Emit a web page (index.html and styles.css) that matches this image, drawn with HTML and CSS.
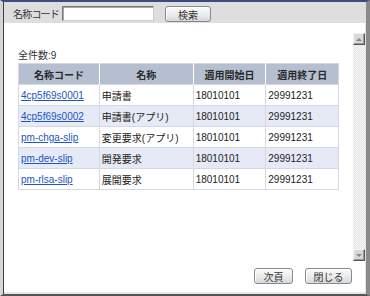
FILE: index.html
```html
<!DOCTYPE html>
<html lang="ja">
<head>
  <meta charset="UTF-8" />
  <title>名称コード検索</title>
  <link rel="stylesheet" href="styles.css">
</head>
<body>
  <div class="window">
    <!-- 検索バー -->
    <div class="toolbar">
      <label class="search-label" for="code">名称コード</label>
      <input class="search-input" id="code" type="text" />
      <button class="btn search-btn">検索</button>
    </div>

    <div class="main">
      <div class="content">
        <div class="count">全件数:9</div>
        <table class="list">
          <thead>
            <tr>
              <th class="col-code">名称コード</th>
              <th class="col-name">名称</th>
              <th class="col-date">適用開始日</th>
              <th class="col-date">適用終了日</th>
            </tr>
          </thead>
          <tbody>
            <tr>
              <td><a href="#">4cp5f69s0001</a></td>
              <td>申請書</td>
              <td>18010101</td>
              <td>29991231</td>
            </tr>
            <tr class="alt">
              <td><a href="#">4cp5f69s0002</a></td>
              <td>申請書(アプリ)</td>
              <td>18010101</td>
              <td>29991231</td>
            </tr>
            <tr>
              <td><a href="#">pm-chga-slip</a></td>
              <td>変更要求(アプリ)</td>
              <td>18010101</td>
              <td>29991231</td>
            </tr>
            <tr class="alt">
              <td><a href="#">pm-dev-slip</a></td>
              <td>開発要求</td>
              <td>18010101</td>
              <td>29991231</td>
            </tr>
            <tr>
              <td><a href="#">pm-rlsa-slip</a></td>
              <td>展開要求</td>
              <td>18010101</td>
              <td>29991231</td>
            </tr>
          </tbody>
        </table>
      </div>

      <div class="scrollbar">
        <div class="sb-btn"><span class="arrow up"></span></div>
        <div class="sb-track"></div>
        <div class="sb-btn"><span class="arrow down"></span></div>
      </div>
    </div>

    <div class="footer">
      <button class="btn foot-btn">次頁</button>
      <button class="btn foot-btn wide">閉じる</button>
    </div>
  </div>
</body>
</html>
```

FILE: styles.css
```css
* {
  margin: 0;
  padding: 0;
  box-sizing: border-box;
}

html, body {
  width: 370px;
  height: 296px;
  overflow: hidden;
  background: #fff;
  font-family: 'Liberation Sans', 'Noto Sans CJK JP', sans-serif;
  font-size: 10px;
  color: #222;
}

.window {
  display: flex;
  flex-direction: column;
  width: 370px;
  height: 296px;
  padding-left: 1px;
  border-top: 2px solid #3d4c80;
  border-left: 3px solid #d6d6d6;
  border-right: 4px solid #8a8a8a;
  border-bottom: 2px solid #555;
  box-shadow: inset 1px 0 #404040, inset -1px 0 #e4e4e4, inset 0 -2px #e6e6e6;
  background: #fff;
}

.toolbar {
  display: flex;
  align-items: center;
  height: 21px;
  padding: 2px 0 0 9px;
  background: #dedede;
}

.search-label {
  width: 49px;
  color: #333;
  letter-spacing: -0.8px;
  white-space: nowrap;
}

.search-input {
  width: 92px;
  height: 15px;
  border: 1px solid #777;
  border-right-color: #ccc;
  border-bottom-color: #ccc;
  box-shadow: inset 1px 1px #a8a8a8;
  background: #fff;
  outline: none;
}

.btn {
  font-family: 'Liberation Sans', 'Noto Sans CJK JP', sans-serif;
  font-size: 10px;
  color: #333;
  height: 16px;
  border: 1px solid #7f8b99;
  border-radius: 3px;
  background: linear-gradient(#fbfbfb, #e9e9e9 60%, #d8d8d8);
  box-shadow: inset 1px 1px #fff;
}

.search-btn {
  width: 46px;
  margin-left: 11px;
}

.main {
  flex: 1;
  display: flex;
  padding-top: 10px;
}

.content {
  flex: 1;
  padding: 14px 0 0 14px;
}

.count {
  height: 16px;
  color: #333;
}

.list {
  width: 321px;
  border-collapse: collapse;
  border: 1px solid #d4d8e0;
}

.list th {
  height: 21px;
  background: #b5bfd0;
  color: #2a2a2a;
  font-weight: bold;
  text-align: center;
  border-left: 1px solid #fff;
}

.list th:first-child {
  border-left: none;
}

.list td {
  height: 21px;
  padding: 0 2px;
  border: 1px solid #d4d8e2;
  white-space: nowrap;
}

.list tr.alt td {
  background: #e6eaf6;
}

.list a {
  color: #1d55c4;
}

.col-code { width: 81px; }
.col-name { width: 94px; }
.col-date { width: 73px; }

.scrollbar {
  display: flex;
  flex-direction: column;
  width: 12px;
  height: 228px;
  margin-right: 1px;
}

.sb-btn {
  display: flex;
  align-items: center;
  justify-content: center;
  width: 12px;
  height: 12px;
  background: #d8d8d8;
  border: 1px solid #f4f4f4;
  border-right-color: #555;
  border-bottom-color: #555;
  box-shadow: inset -1px -1px #999;
}

.sb-track {
  flex: 1;
  background: repeating-conic-gradient(#e2e2e2 0 25%, #fafafa 0 50%) 0 0 / 2px 2px;
}

.arrow {
  width: 0;
  height: 0;
  border-left: 3px solid transparent;
  border-right: 3px solid transparent;
}

.arrow.up {
  border-bottom: 3px solid #888;
}

.arrow.down {
  border-top: 3px solid #888;
}

.footer {
  display: flex;
  justify-content: flex-end;
  gap: 12px;
  padding: 7px 14px 10px 0;
}

.foot-btn {
  width: 39px;
}

.foot-btn.wide {
  width: 47px;
}
```
